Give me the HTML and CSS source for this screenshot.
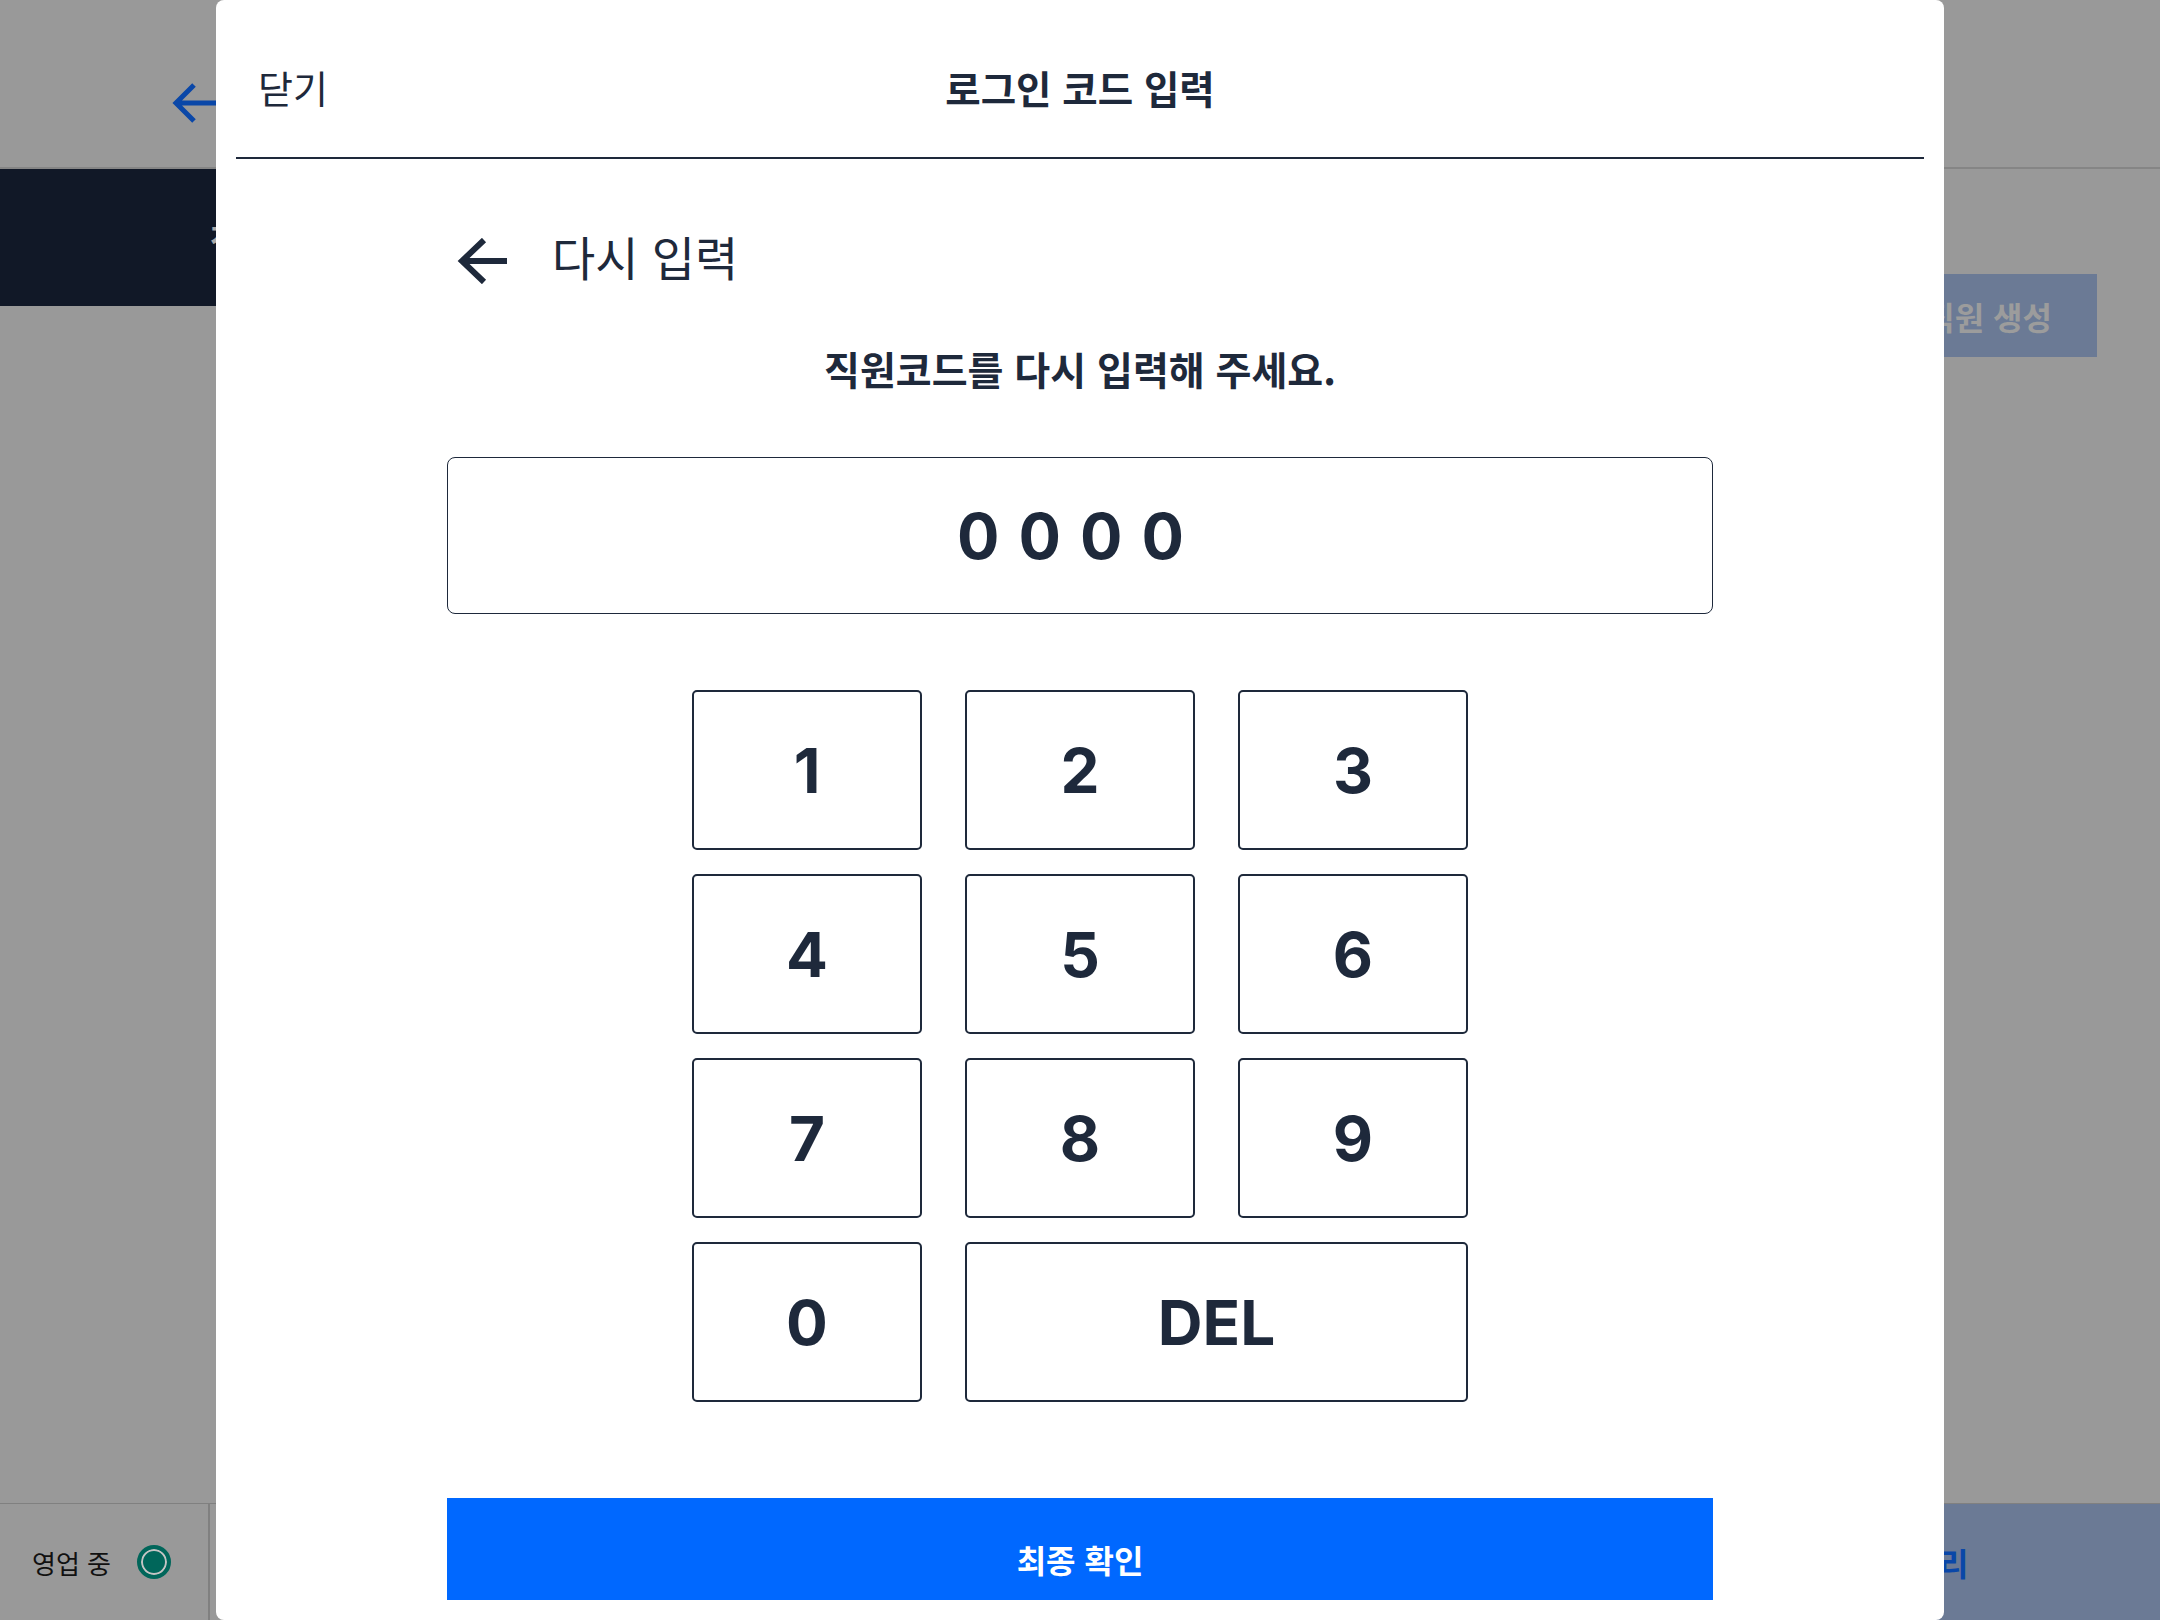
FILE: index.html
```html
<!DOCTYPE html>
<html lang="ko">
<head>
<meta charset="utf-8">
<title>로그인 코드 입력</title>
<link rel="stylesheet" href="styles.css">
</head>
<body>
<div class="page">
  <header class="topbar">
    <svg class="back-blue" width="46" height="40" viewBox="0 0 46 40"><path d="M46 20H5M23 2L5 20L23 38" fill="none" stroke="#0a47a8" stroke-width="5"/></svg>
  </header>
  <section class="content">
    <div class="tabs"><span class="tab">전체 직원</span></div>
    <button class="create-btn">신규 직원 생성</button>
  </section>
  <footer class="bottombar">
    <div class="status"><span>영업 중</span><span class="dot"></span></div>
    <div class="spacer"></div>
    <div class="manage">직원 관리</div>
  </footer>
</div>

<div class="modal">
  <div class="modal-header">
    <span class="close">닫기</span>
    <h1 class="title">로그인 코드 입력</h1>
    <span></span>
  </div>
  <div class="modal-body">
    <div class="back-row">
      <svg class="back" width="50" height="46" viewBox="0 0 50 46"><path d="M50 23H5M27 2L5 23L27 44" fill="none" stroke="#1e293b" stroke-width="6"/></svg>
      <span class="back-label">다시 입력</span>
    </div>
    <p class="prompt">직원코드를 다시 입력해 주세요.</p>
    <div class="code-box"><span class="code">0000</span></div>
    <div class="keypad">
      <button class="key">1</button>
      <button class="key">2</button>
      <button class="key">3</button>
      <button class="key">4</button>
      <button class="key">5</button>
      <button class="key">6</button>
      <button class="key">7</button>
      <button class="key">8</button>
      <button class="key">9</button>
      <button class="key">0</button>
      <button class="key key-wide">DEL</button>
    </div>
    <button class="confirm">최종 확인</button>
  </div>
</div>
</body>
</html>
```

FILE: styles.css
```css
* { box-sizing: border-box; }
html, body { margin: 0; padding: 0; }
body {
  width: 2160px;
  height: 1620px;
  position: relative;
  overflow: hidden;
  background: #999999;
  font-family: "Noto Sans CJK KR", "Noto Sans", sans-serif;
  color: #1e293b;
}
button { font-family: inherit; margin: 0; cursor: pointer; }

/* background page (dimmed) */
.page { display: flex; flex-direction: column; height: 1620px; }
.topbar {
  height: 169px;
  border-bottom: 2px solid #858585;
  display: flex;
  align-items: center;
  padding: 38px 0 0 171px;
}
.back-blue { display: block; }
.content { flex: 1; display: flex; justify-content: space-between; align-items: flex-start; }
.tabs {
  width: 900px;
  height: 137px;
  background: #111827;
  display: flex;
  align-items: center;
  padding-left: 210px;
}
.tab { color: #a9a9a9; font-size: 32px; font-weight: 700; }
.create-btn {
  margin: 105px 63px 0 0;
  height: 83px;
  border: 0;
  background: #6b7a95;
  color: #9c9c9c;
  font-size: 32px;
  font-weight: 700;
  padding: 0 45px 0 40px;
}
.bottombar {
  height: 117px;
  border-top: 1px solid #808080;
  display: flex;
}
.status {
  width: 210px;
  border-right: 2px solid #808080;
  display: flex;
  align-items: center;
  padding-left: 32px;
  gap: 26px;
  font-size: 26px;
  color: #111;
}
.dot {
  width: 34px;
  height: 34px;
  border-radius: 50%;
  border: 4px solid #00665a;
  background: #00665a;
  box-shadow: inset 0 0 0 2px #c4c4c4;
}
.spacer { flex: 1; }
.manage {
  width: 510px;
  background: #6b7a95;
  color: #0a47a8;
  font-size: 32px;
  font-weight: 700;
  display: flex;
  align-items: center;
  justify-content: center;
}

/* modal */
.modal {
  position: absolute;
  left: 216px;
  top: 0;
  width: 1728px;
  height: 1620px;
  background: #fff;
  border-radius: 8px;
}
.modal-header {
  margin: 0 20px;
  height: 159px;
  padding: 16px 22px 0;
  border-bottom: 2px solid #1e293b;
  display: grid;
  grid-template-columns: 1fr auto 1fr;
  align-items: center;
}
.close { font-size: 38px; color: #1e293b; }
.title { margin: 0; font-size: 38.5px; font-weight: 700; color: #1e293b; }

.modal-body {
  padding: 0 231px;
  display: flex;
  flex-direction: column;
}
.back-row {
  margin-top: 69px;
  height: 60px;
  display: flex;
  align-items: center;
  gap: 45px;
  padding-left: 10px;
}
.back { display: block; margin-top: 6px; }
.back-label { font-size: 47px; color: #1e293b; margin-bottom: 6px; }
.prompt {
  margin: 55px 0 0;
  text-align: center;
  font-size: 39px;
  line-height: 50px;
  font-weight: 700;
}
.code-box {
  margin-top: 64px;
  height: 157px;
  border: 1.5px solid #1e293b;
  border-radius: 8px;
  display: flex;
  align-items: center;
  justify-content: center;
}
.code {
  font-family: "Inter", "Noto Sans", sans-serif;
  font-size: 63px;
  font-weight: 700;
  letter-spacing: 19px;
}
.keypad {
  margin: 76px auto 0;
  display: grid;
  grid-template-columns: repeat(3, 230px);
  grid-auto-rows: 160px;
  column-gap: 43px;
  row-gap: 24px;
}
.key {
  background: #fff;
  border: 2px solid #1e293b;
  border-radius: 5px;
  color: #1e293b;
  font-family: "Inter", "Noto Sans", sans-serif;
  font-size: 62px;
  font-weight: 700;
  padding: 0;
}
.key-wide { grid-column: span 2; }
.confirm {
  margin-top: 96px;
  height: 102px;
  border: 0;
  background: #0068ff;
  color: #fff;
  font-size: 32px;
  font-weight: 700;
  padding-top: 20px;
}
```
